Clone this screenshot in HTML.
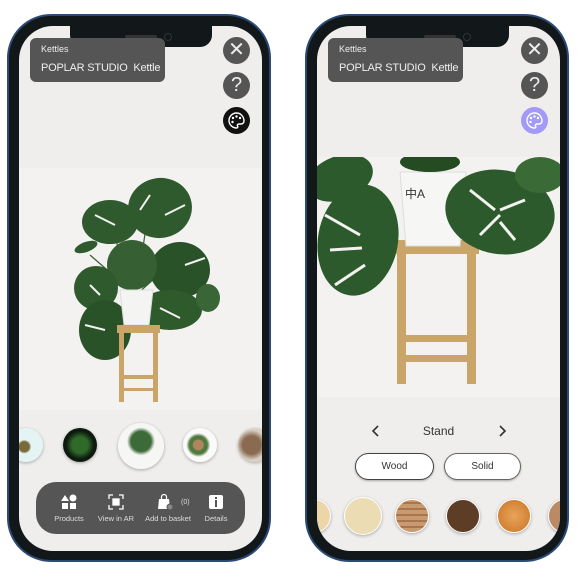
<!DOCTYPE html>
<html><head><style>
body{margin:0;width:578px;height:578px;background:#fff;position:relative;overflow:hidden;font-family:"Liberation Sans",sans-serif}
.ph{position:absolute;top:14px;width:264px;height:548px;border:2px solid #2b4a78;border-radius:44px;background:#121719;box-sizing:border-box}
.scr{position:absolute;top:26px;width:243px;height:525px;border-radius:34px;background:#efeeec;overflow:hidden}
.notch{position:absolute;top:0;height:21px;background:#121719;border-radius:0 0 12px 12px}
.lbl{position:absolute;top:12px;width:135px;height:44px;background:#555;border-radius:6px;color:#eee}
.lbl .a{position:absolute;left:11px;top:6px;font-size:9px}
.lbl .b{position:absolute;left:11px;top:24px;font-size:11px;letter-spacing:-.2px}
.btn{position:absolute;width:27px;height:27px;border-radius:50%;background:#555;color:#eee;text-align:center;line-height:27px;font-size:20px}
.th{position:absolute;border-radius:50%;box-shadow:0 1px 3px rgba(0,0,0,.3)}
.bar{position:absolute;left:17px;top:456px;width:209px;height:52px;background:#555;border-radius:20px;color:#ddd;font-size:7.5px}
.bar span{position:absolute;top:32px;transform:translateX(-50%);white-space:nowrap}
.pill{position:absolute;top:427px;height:27px;border:1.5px solid #444;border-radius:14px;background:#fff;text-align:center;line-height:25px;font-size:10px;color:#333;box-sizing:border-box;box-shadow:0 1px 2px rgba(0,0,0,.3)}
.sw{position:absolute;top:473px;width:34px;height:34px;border-radius:50%;box-shadow:0 1px 3px rgba(0,0,0,.3);border:1.5px solid #fff;box-sizing:border-box}
</style></head><body>
<div class="ph" style="left:7px"></div>
<div class="ph" style="left:305px"></div>

<!-- phone 1 -->
<div class="scr" style="left:19px">
 <div style="position:absolute;left:0;top:142px;width:243px;height:242px;background:#f3f2f0"></div>
 <svg style="position:absolute;left:0;top:142px" width="243" height="242" viewBox="19 168 243 242">
  <g stroke="#3d5b35" stroke-width="1.2" fill="none">
   <path d="M136 295 L150 200 M136 295 L110 225 M136 295 L90 255 M136 295 L175 260 M136 295 L125 265"/>
  </g>
  <g fill="#2f5a2e">
   <ellipse cx="160" cy="208" rx="32" ry="30" transform="rotate(-10 160 208)"/>
   <ellipse cx="110" cy="222" rx="28" ry="22"/>
   <ellipse cx="86" cy="247" rx="12" ry="5" transform="rotate(-20 86 247)"/>
   <ellipse cx="180" cy="270" rx="30" ry="28" fill="#2a5229"/>
   <ellipse cx="132" cy="265" rx="25" ry="25" fill="#365f33"/>
   <ellipse cx="96" cy="288" rx="22" ry="22"/>
   <ellipse cx="105" cy="330" rx="26" ry="30" fill="#2a5229"/>
   <ellipse cx="170" cy="310" rx="32" ry="20" fill="#2e5a2c"/>
   <ellipse cx="208" cy="298" rx="12" ry="14" fill="#3a6537"/>
  </g>
  <g stroke="#f3f2f0" stroke-width="2"><path d="M150 195 L140 210 M165 215 L185 205 M95 215 L115 225 M185 265 L205 258 M85 325 L105 330 M160 308 L180 318 M90 285 L100 295"/></g>
  <path d="M120 290 L153 290 L149 325 L124 325Z" fill="#f4f4f2" stroke="#ddd"/>
  <g fill="#c9a56a"><rect x="117" y="325" width="43" height="8"/><rect x="119" y="333" width="5" height="69"/><rect x="153" y="333" width="5" height="69"/><rect x="122" y="375" width="33" height="4"/><rect x="122" y="388" width="33" height="3"/></g>
 </svg>
 <div class="notch" style="left:51px;width:142px"><div style="position:absolute;left:55px;top:9px;width:32px;height:3px;background:#333;border-radius:2px"></div><div style="position:absolute;left:94px;top:7px;width:6px;height:6px;border-radius:50%;border:1px solid #333"></div></div>
 <div class="lbl" style="left:11px"><div class="a">Kettles</div><div class="b">POPLAR STUDIO&nbsp; Kettle</div></div>
 <div class="btn" style="left:204px;top:11px">✕</div>
 <div class="btn" style="left:204px;top:46px">?</div>
 <div class="btn" style="left:204px;top:81px;background:#111"><svg width="27" height="27" viewBox="0 0 27 27"><path d="M13.5 6a7.5 7.5 0 1 0 0 15c1.5 0 1.5-1.2 1-2s0-2 1.5-2h2a3 3 0 0 0 3-3c0-4.5-3.5-8-7.5-8z" fill="none" stroke="#fff" stroke-width="1.4"/><circle cx="10" cy="11" r="1.2" fill="#fff"/><circle cx="13.5" cy="9.5" r="1.2" fill="#fff"/><circle cx="17" cy="11" r="1.2" fill="#fff"/><circle cx="9.5" cy="15" r="1.2" fill="#fff"/></svg></div>
 <div class="th" style="left:-10px;top:402px;width:34px;height:34px;background:radial-gradient(circle at 45% 55%,#7a6a3a 0 5px,#e4f3f3 7px)"></div>
 <div class="th" style="left:44px;top:402px;width:34px;height:34px;background:radial-gradient(circle,#2f6a2a 0 8px,#0e1a10 14px)"></div>
 <div class="th" style="left:99px;top:397px;width:46px;height:46px;background:radial-gradient(circle at 50% 40%,#3c6a38 0 10px,#f6f6f4 14px)"></div>
 <div class="th" style="left:164px;top:402px;width:34px;height:34px;background:radial-gradient(circle at 45% 50%,#b08460 0 5px,#4f7a3c 6px 9px,#fafafa 12px)"></div>
 <div class="th" style="left:219px;top:402px;width:34px;height:34px;background:radial-gradient(circle at 40% 50%,#8a6a50 0 9px,#d9cfc3 15px)"></div>
 <div class="bar">
  <svg style="position:absolute;left:25px;top:12px" width="16" height="16"><path d="M4 1L8 7H0Z" fill="#fff"/><circle cx="12" cy="4" r="3.5" fill="#fff"/><rect x="1" y="9" width="6" height="6" fill="#fff"/><rect x="9" y="9" width="6" height="6" fill="#fff"/></svg>
  <svg style="position:absolute;left:72px;top:12px" width="16" height="16" fill="none" stroke="#fff" stroke-width="1.3"><path d="M1 5V1h4M11 1h4v4M15 11v4h-4M5 15H1v-4"/><rect x="5" y="5" width="6" height="6" fill="#fff"/></svg>
  <svg style="position:absolute;left:121px;top:11px" width="18" height="18"><path d="M2 6h10l1 10H1Z" fill="#fff"/><path d="M4.5 6V4a2.5 2.5 0 0 1 5 0v2" stroke="#fff" fill="none" stroke-width="1.2"/><circle cx="13" cy="14" r="3" fill="#888" stroke="#555"/></svg>
  <span style="left:145px;top:17px;transform:none;font-size:7px">(0)</span>
  <svg style="position:absolute;left:172px;top:12px" width="16" height="16"><rect x="1" y="1" width="14" height="14" rx="2" fill="#fff"/><rect x="7" y="6" width="2" height="7" fill="#555"/><rect x="7" y="3" width="2" height="2" fill="#555"/></svg>
  <span style="left:33px">Products</span><span style="left:80px">View in AR</span><span style="left:132px">Add to basket</span><span style="left:180px">Details</span>
 </div>
</div>

<!-- phone 2 -->
<div class="scr" style="left:317px">
 <div style="position:absolute;left:0;top:131px;width:243px;height:240px;background:#f3f2f0"></div>
 <svg style="position:absolute;left:0;top:131px" width="243" height="240" viewBox="317 157 243 240">
  <g fill="#c9a56a"><rect x="393" y="240" width="86" height="14"/><rect x="397" y="254" width="9" height="130"/><rect x="467" y="254" width="9" height="130"/><rect x="403" y="335" width="67" height="7"/><rect x="403" y="355" width="67" height="7"/></g>
  <path d="M400 172 L466 172 L460 246 L406 246Z" fill="#f6f6f4" stroke="#ddd"/>
  <text x="405" y="198" font-size="12" fill="#333" font-family="Liberation Sans,Noto Sans CJK SC,sans-serif">中A</text>
  <g fill="#2d5a2c">
   <ellipse cx="340" cy="178" rx="34" ry="22" transform="rotate(-20 340 178)"/>
   <ellipse cx="358" cy="240" rx="40" ry="56" transform="rotate(10 358 240)"/>
   <ellipse cx="500" cy="212" rx="55" ry="42" transform="rotate(10 500 212)"/>
   <ellipse cx="540" cy="175" rx="25" ry="18" fill="#3a6a35"/>
   <ellipse cx="430" cy="162" rx="30" ry="10" fill="#244b22"/>
  </g>
  <g stroke="#f3f2f0" stroke-width="3"><path d="M325 215 L360 235 M330 250 L362 248 M335 285 L365 265 M470 190 L495 210 M480 235 L500 215 M525 200 L500 210 M515 240 L500 222"/></g>
 </svg>
 <div class="notch" style="left:49px;width:143px"><div style="position:absolute;left:58px;top:9px;width:32px;height:3px;background:#333;border-radius:2px"></div><div style="position:absolute;left:97px;top:7px;width:6px;height:6px;border-radius:50%;border:1px solid #333"></div></div>
 <div class="lbl" style="left:11px"><div class="a">Kettles</div><div class="b">POPLAR STUDIO&nbsp; Kettle</div></div>
 <div class="btn" style="left:204px;top:11px">✕</div>
 <div class="btn" style="left:204px;top:46px">?</div>
 <div class="btn" style="left:204px;top:81px;background:#a29af6"><svg width="27" height="27" viewBox="0 0 27 27"><path d="M13.5 6a7.5 7.5 0 1 0 0 15c1.5 0 1.5-1.2 1-2s0-2 1.5-2h2a3 3 0 0 0 3-3c0-4.5-3.5-8-7.5-8z" fill="none" stroke="#fff" stroke-width="1.4"/><circle cx="10" cy="11" r="1.2" fill="#fff"/><circle cx="13.5" cy="9.5" r="1.2" fill="#fff"/><circle cx="17" cy="11" r="1.2" fill="#fff"/><circle cx="9.5" cy="15" r="1.2" fill="#fff"/></svg></div>
 <svg style="position:absolute;left:54px;top:398px" width="10" height="14"><path d="M7 2L2 7L7 12" stroke="#333" stroke-width="1.6" fill="none"/></svg>
 <div style="position:absolute;left:0;width:243px;top:398px;text-align:center;font-size:12px;color:#333;padding-left:0">Stand</div>
 <svg style="position:absolute;left:180px;top:398px" width="10" height="14"><path d="M3 2L8 7L3 12" stroke="#333" stroke-width="1.6" fill="none"/></svg>
 <div class="pill" style="left:38px;width:79px">Wood</div>
 <div class="pill" style="left:127px;width:77px;border-color:#666">Solid</div>
 <div class="sw" style="left:-20px;background:#ecd6a8"></div>
 <div class="sw" style="left:27px;width:38px;height:38px;top:471px;background:#ecdcb4"></div>
 <div class="sw" style="left:78px;background:repeating-linear-gradient(0deg,#c89a6e 0 4px,#a87550 4px 6px)"></div>
 <div class="sw" style="left:129px;background:#5e3d26"></div>
 <div class="sw" style="left:180px;background:radial-gradient(circle,#e9a45a,#c87424)"></div>
 <div class="sw" style="left:231px;background:#b98a63"></div>
</div>
</body></html>
